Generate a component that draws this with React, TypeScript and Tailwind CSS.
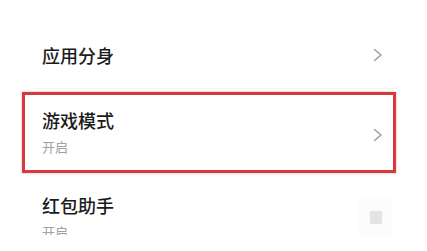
import React from "react";

const Chevron = ({ className = "" }: { className?: string }) => (
  <svg width="10" height="14" viewBox="0 0 10 14" className={className} fill="none">
    <polyline points="1.5,1.5 8,7 1.5,12.5" stroke="#9c9c9c" strokeWidth="1.5" strokeLinecap="round" strokeLinejoin="round" />
  </svg>
);

export default function App() {
  const font = { fontFamily: '"Noto Sans CJK SC", "Noto Sans", sans-serif' };
  return (
    <div className="w-[427px] h-[235px] overflow-hidden bg-white" style={font}>
      {/* Row 1 */}
      <div className="h-[88px] pl-[42px] pr-[44px] pt-[43px] flex justify-between items-start">
        <span className="text-[18px] leading-[24px] font-medium text-[#1b1b1b]">应用分身</span>
        <Chevron className="mt-[5px]" />
      </div>
      <div className="ml-[34px] mr-[30px] h-px bg-[#f2f2f2]" />

      {/* Row 2 highlighted */}
      <div className="ml-[22px] mt-[3px] w-[374px] h-[81px] border-[3px] border-[#d43a3e] shadow-[0_0_2px_rgba(212,58,62,0.45)] flex items-start justify-between pl-[17px] pr-[10px]">
        <div className="flex flex-col pt-[13px]">
          <span className="text-[18px] leading-[24px] font-medium text-[#1b1b1b]">游戏模式</span>
          <span className="mt-[6px] text-[13px] leading-[18px] text-[#a0a0a0]">开启</span>
        </div>
        <Chevron className="mt-[33px]" />
      </div>

      {/* Row 3 */}
      <div className="pl-[42px] pr-[35px] flex justify-between items-start">
        <div className="flex flex-col pt-[20px]">
          <span className="text-[18px] leading-[24px] font-medium text-[#1b1b1b]">红包助手</span>
          <span className="mt-[6px] text-[13px] leading-[18px] text-[#a0a0a0]">开启</span>
        </div>
        <div className="mt-[26px] w-[34px] h-[36px] bg-[#fbfbfb] pt-[12px] pl-[12px]">
          <div className="w-[12px] h-[13px] bg-[#e4e4e4]" />
        </div>
      </div>
    </div>
  );
}
